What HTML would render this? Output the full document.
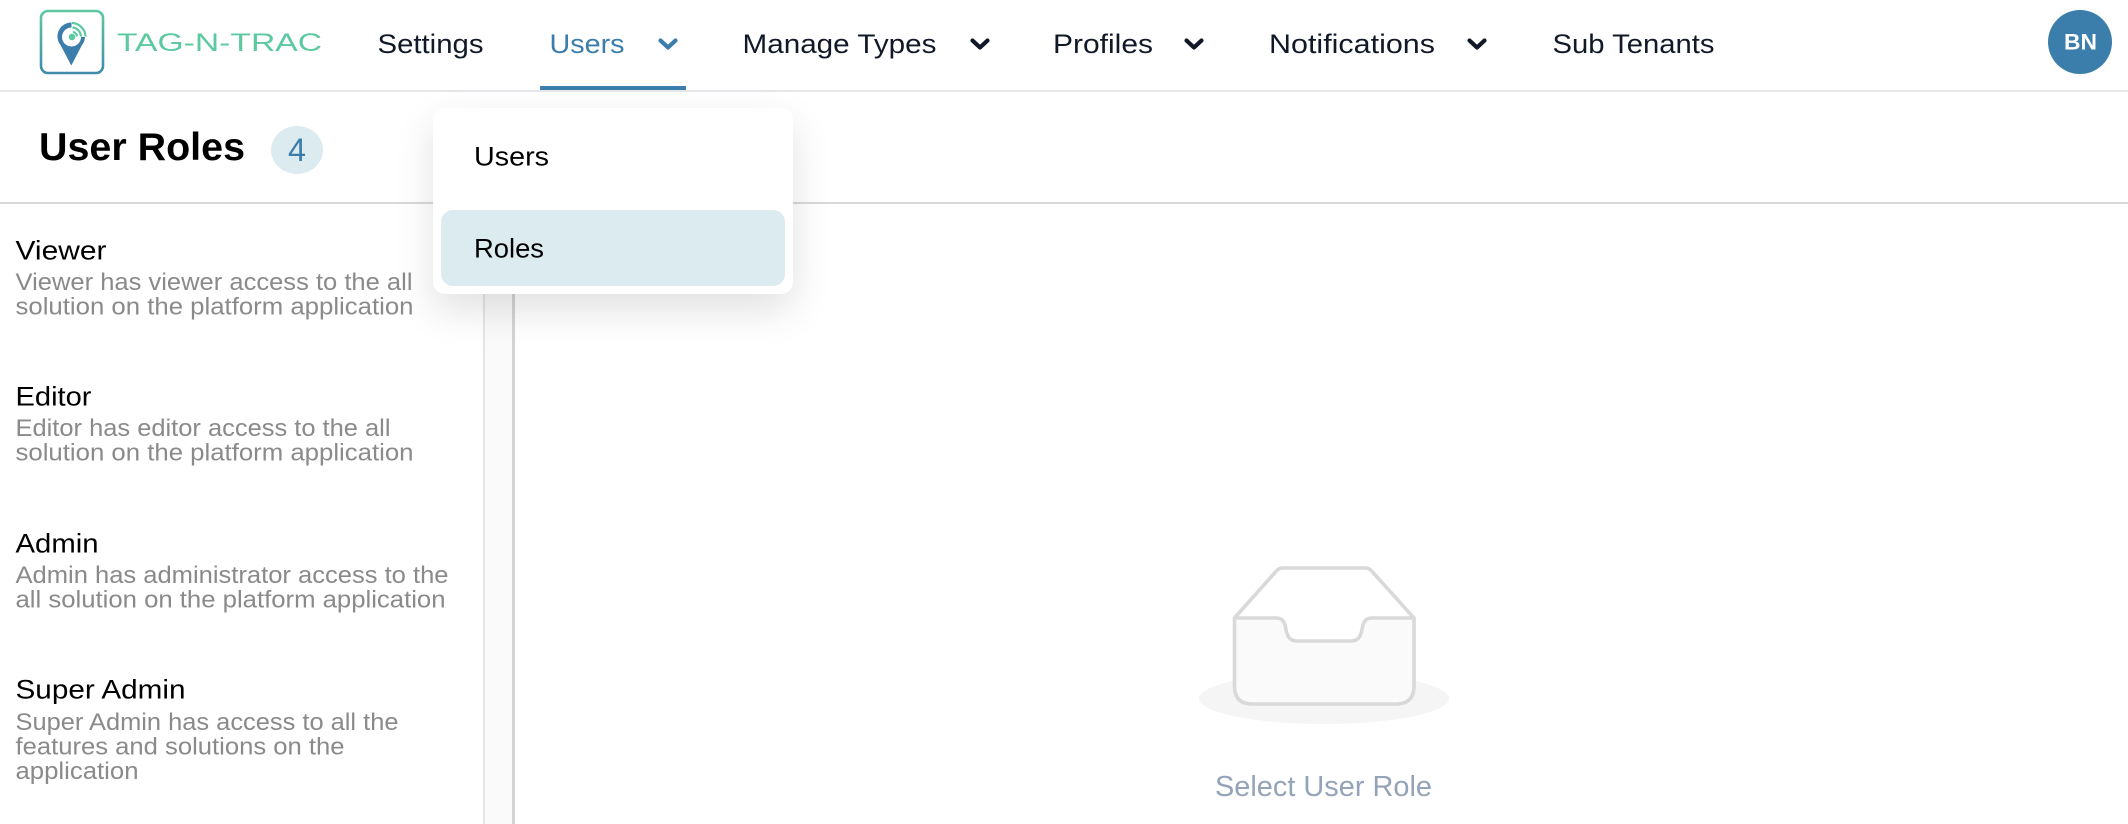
<!DOCTYPE html>
<html lang="en"><head><meta charset="utf-8"><title>User Roles</title>
<style>
html,body{margin:0;padding:0;width:2128px;height:824px;overflow:hidden;background:#fff}
body{position:relative;font-family:"Liberation Sans",sans-serif}
.a{position:absolute}
svg{position:absolute;left:0;top:0}
text{font-family:"Liberation Sans",sans-serif}
.nav{font-size:27px;fill:#111827;-webkit-text-stroke:.2px #111827}
.t{font-size:27px;fill:#000}
.d{font-size:24px;fill:#8a8a8a}
</style></head><body>
<div class="a" style="left:0;top:90px;width:2128px;height:2px;background:#e5e7eb"></div>
<div class="a" style="left:540px;top:86px;width:146px;height:4px;background:#3b7dab"></div>
<div class="a" style="left:0;top:202px;width:2128px;height:2px;background:#d9d9d9"></div>
<div class="a" style="left:483px;top:204px;width:30px;height:620px;background:#fafafa"></div>
<div class="a" style="left:483px;top:204px;width:2px;height:620px;background:#e5e5e5"></div>
<div class="a" style="left:512px;top:204px;width:3px;height:620px;background:#d4d4d4"></div>
<div class="a" style="left:271px;top:126px;width:52px;height:48px;border-radius:50%;background:#dcebef"></div>
<div class="a" style="left:433px;top:108px;width:360px;height:186px;background:#fff;border-radius:12px;box-shadow:0 16px 40px rgba(0,0,0,.12)"></div>
<div class="a" style="left:441px;top:210px;width:344px;height:76px;background:#dcebef;border-radius:12px"></div>
<div class="a" style="left:2048px;top:10px;width:64px;height:64px;border-radius:50%;background:#3b7dab"></div>
<svg width="2128" height="824" viewBox="0 0 2128 824" xmlns="http://www.w3.org/2000/svg">
<defs><linearGradient id="g" x1="0" y1="0" x2="0" y2="1"><stop offset="0" stop-color="#5cc9a0"/><stop offset="1" stop-color="#3f8cab"/></linearGradient></defs>
<rect x="41" y="11" width="62" height="62" rx="7" fill="none" stroke="url(#g)" stroke-width="2.600"/>
<path d="M60.500 45A13.800 13.800 0 1 1 82 45L71.300 65.500Z" fill="#3b7dab"/>
<path d="M71.500 22C79.500 22 85.500 29 85.500 37L71.500 37Z" fill="#fff"/>
<circle cx="71.500" cy="37" r="9.500" fill="#fff"/>
<circle cx="72" cy="37" r="3.300" fill="#5cc9a0"/>
<g fill="none" stroke="#5cc9a0" stroke-width="2.200">
<path d="M72 23A14 14 0 0 1 85.500 36.500"/><path d="M72.500 27.500A9.500 9.500 0 0 1 81 36.500"/><path d="M73 32A5 5 0 0 1 77 36.500"/>
</g>
<text x="117" y="51" font-size="25" fill="#5cc9a0" textLength="205" lengthAdjust="spacingAndGlyphs">TAG-N-TRAC</text>

<text class="nav" x="377.500" y="53" textLength="106" lengthAdjust="spacingAndGlyphs">Settings</text>
<text class="nav" x="549.500" y="53" textLength="75" lengthAdjust="spacingAndGlyphs" style="fill:#3b7dab;-webkit-text-stroke:.2px #3b7dab">Users</text>
<text class="nav" x="742.500" y="53" textLength="194" lengthAdjust="spacingAndGlyphs">Manage Types</text>
<text class="nav" x="1053" y="53" textLength="100" lengthAdjust="spacingAndGlyphs">Profiles</text>
<text class="nav" x="1269" y="53" textLength="166" lengthAdjust="spacingAndGlyphs">Notifications</text>
<text class="nav" x="1552.500" y="53" textLength="162" lengthAdjust="spacingAndGlyphs">Sub Tenants</text>
<g fill="none" stroke-width="4.200" stroke-linecap="round" stroke-linejoin="round">
<path d="M660.500 40.500L668 47.500L675.500 40.500" stroke="#3b7dab"/>
<path d="M972.500 40.500L980 47.500L987.500 40.500" stroke="#111827"/>
<path d="M1186.500 40.500L1194 47.500L1201.500 40.500" stroke="#111827"/>
<path d="M1469.500 40.500L1477 47.500L1484.500 40.500" stroke="#111827"/>
</g>
<text x="2064" y="49.500" font-size="22.500" font-weight="700" fill="#fff" textLength="33" lengthAdjust="spacingAndGlyphs">BN</text>

<text x="39" y="160" font-size="38.500" font-weight="700" fill="#000" textLength="206" lengthAdjust="spacingAndGlyphs">User Roles</text>
<text x="288" y="161" font-size="32" fill="#3b7dab" textLength="18" lengthAdjust="spacingAndGlyphs">4</text>

<text x="474" y="165.500" font-size="27" fill="#000" textLength="75" lengthAdjust="spacingAndGlyphs">Users</text>
<text x="474" y="257.500" font-size="27" fill="#000" textLength="70" lengthAdjust="spacingAndGlyphs">Roles</text>

<text class="t" x="15.500" y="259.500" textLength="91" lengthAdjust="spacingAndGlyphs">Viewer</text>
<text class="d" x="15.500" y="290" textLength="397" lengthAdjust="spacingAndGlyphs">Viewer has viewer access to the all</text>
<text class="d" x="15.500" y="314.500" textLength="398" lengthAdjust="spacingAndGlyphs">solution on the platform application</text>
<text class="t" x="15.500" y="405.500" textLength="76" lengthAdjust="spacingAndGlyphs">Editor</text>
<text class="d" x="15.500" y="436" textLength="375" lengthAdjust="spacingAndGlyphs">Editor has editor access to the all</text>
<text class="d" x="15.500" y="460.500" textLength="398" lengthAdjust="spacingAndGlyphs">solution on the platform application</text>
<text class="t" x="15.500" y="552.500" textLength="83" lengthAdjust="spacingAndGlyphs">Admin</text>
<text class="d" x="15.500" y="583" textLength="433" lengthAdjust="spacingAndGlyphs">Admin has administrator access to the</text>
<text class="d" x="15.500" y="607.500" textLength="430" lengthAdjust="spacingAndGlyphs">all solution on the platform application</text>
<text class="t" x="15.500" y="698.500" textLength="170" lengthAdjust="spacingAndGlyphs">Super Admin</text>
<text class="d" x="15.500" y="730" textLength="383" lengthAdjust="spacingAndGlyphs">Super Admin has access to all the</text>
<text class="d" x="15.500" y="754.500" textLength="329" lengthAdjust="spacingAndGlyphs">features and solutions on the</text>
<text class="d" x="15.500" y="779" textLength="123" lengthAdjust="spacingAndGlyphs">application</text>

<ellipse cx="1324" cy="698.500" rx="125" ry="25.500" fill="#f5f5f5"/>
<path d="M1234.500 618L1275 572.500Q1278.500 568 1282 568H1366Q1369.500 568 1373 572.500L1414 618" fill="#fff" stroke="#d9d9d9" stroke-width="3.600" stroke-linejoin="round"/>
<path d="M1234.500 618H1276Q1284 618 1285.500 627C1287 637 1290 641 1297 641H1351C1358 641 1361 637 1362.500 627Q1364 618 1372 618H1414V686Q1414 704 1396 704H1252Q1234.500 704 1234.500 686Z" fill="#fafafa" stroke="#d9d9d9" stroke-width="3.600" stroke-linejoin="round"/>
<text x="1215" y="796" font-size="28.500" fill="#94a3b8" textLength="217" lengthAdjust="spacingAndGlyphs">Select User Role</text>
</svg>
</body></html>
